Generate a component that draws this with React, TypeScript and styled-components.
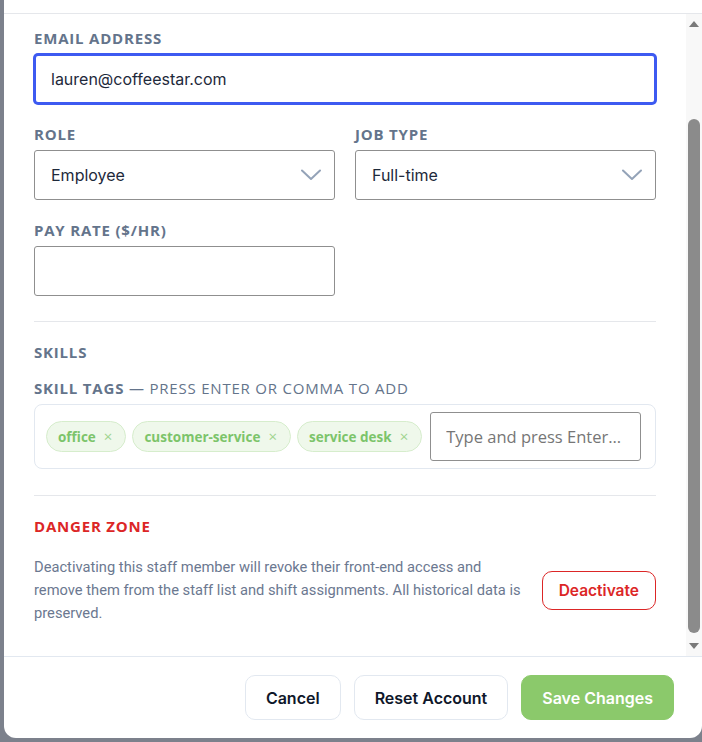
import React, { useCallback, useLayoutEffect, useRef, useState } from "react";
import styled, { createGlobalStyle, css } from "styled-components";

const GlobalStyle = createGlobalStyle`
  html, body { margin: 0; height: 100%; }
  body {
    font-family: "Open Sans", "Noto Sans", sans-serif;
    background: #7c818c;
  }
  * { box-sizing: border-box; }
`;

const Overlay = styled.div`
  position: fixed;
  inset: 0;
  display: flex;
  flex-direction: column;
  justify-content: flex-end;
  align-items: flex-start;
  padding: 0 0 4px 4px;
  background: #7c818c;
  overflow: hidden;
`;

const Modal = styled.div`
  width: 698px;
  flex-shrink: 0;
  display: flex;
  flex-direction: column;
  background: #ffffff;
  border-radius: 12px;
  overflow: hidden;
`;

// modal header sits above the visible area; only its bottom rule shows
const Header = styled.header`
  flex-shrink: 0;
  height: 64px;
  border-bottom: 1px solid #e5e7eb;
`;

const BodyRow = styled.div`
  height: 642px;
  flex-shrink: 0;
  display: flex;
`;

const Body = styled.div`
  flex: 1;
  min-width: 0;
  overflow-y: auto;
  scrollbar-width: none;
  padding: 120px 30px 31px;

  &::-webkit-scrollbar {
    display: none;
  }
`;

const ScrollRail = styled.div`
  width: 16px;
  flex-shrink: 0;
  display: flex;
  flex-direction: column;
  background: #f8f8f8;
`;

const RailArrow = styled.svg`
  display: block;
  flex-shrink: 0;
`;

const Track = styled.div`
  flex: 1;
  padding: 0 2px 3px;
`;

const Thumb = styled.div`
  width: 12px;
  border-radius: 6px;
  background: #8b8b8b;
`;

const Field = styled.div<{ $last?: boolean }>`
  display: flex;
  flex-direction: column;
  margin-bottom: ${({ $last }) => ($last ? 0 : 20)}px;
`;

const Label = styled.label`
  display: block;
  margin-bottom: 6px;
  font-size: 15px;
  line-height: 20px;
  font-weight: 700;
  letter-spacing: 0.8px;
  text-transform: uppercase;
  color: #64748b;
`;

const Hint = styled.span`
  font-weight: 400;
`;

const fieldBox = css`
  width: 100%;
  height: 50px;
  padding: 0 16px;
  border: 1px solid #8f8f8f;
  border-radius: 3px;
  background: #ffffff;
  font-family: Inter, sans-serif;
  font-size: 16px;
  color: #1e293b;
  outline: none;
`;

const TextInput = styled.input<{ $focused?: boolean }>`
  ${fieldBox}
  ${({ $focused }) =>
    $focused &&
    css`
      border: 2px solid #3d5af1;
      border-radius: 4px;
      box-shadow: 0 0 0 1px #3d5af1;
      padding: 0 15px;
    `}
`;

const SelectWrap = styled.div`
  position: relative;
`;

const Select = styled.select`
  ${fieldBox}
  appearance: none;
  cursor: pointer;
`;

const Chevron = styled.svg`
  position: absolute;
  right: 14px;
  top: 19px;
  pointer-events: none;
`;

const Grid = styled.div`
  display: grid;
  grid-template-columns: 1fr 1fr;
  column-gap: 20px;
`;

const Divider = styled.hr<{ $above: number; $below: number }>`
  margin: ${({ $above, $below }) => `${$above}px 0 ${$below}px`};
  border: 0;
  border-top: 1px solid #e5e7eb;
`;

const SectionTitle = styled.h3<{ $danger?: boolean; $gap: number }>`
  margin: 0 0 ${({ $gap }) => $gap}px;
  font-size: 15px;
  line-height: 20px;
  font-weight: 700;
  letter-spacing: 0.8px;
  text-transform: uppercase;
  color: ${({ $danger }) => ($danger ? "#dc2626" : "#64748b")};
`;

const TagBox = styled.div`
  display: flex;
  align-items: center;
  gap: 6px;
  height: 65px;
  margin-top: 2px;
  padding: 7px 14px 7px 11px;
  border: 1px solid #e2e8f0;
  border-radius: 8px;
`;

const Tag = styled.span`
  display: inline-flex;
  align-items: center;
  height: 31px;
  padding: 0 9px 0 11px;
  border: 1px solid #d6edcc;
  border-radius: 16px;
  background: #eff8eb;
  font-size: 13.5px;
  font-weight: 700;
  color: #7cc46a;
  white-space: nowrap;
`;

const TagRemove = styled.button`
  margin-left: 4px;
  padding: 0 4px;
  border: 0;
  background: none;
  font-family: "Open Sans", sans-serif;
  font-size: 15px;
  line-height: 1;
  color: #9fd48f;
  cursor: pointer;
`;

const TagInput = styled.input`
  flex: 1;
  min-width: 160px;
  height: 49px;
  margin-left: 2px;
  padding: 0 8px 0 15px;
  border: 1px solid #8f8f8f;
  border-radius: 3px;
  font-family: "Open Sans", sans-serif;
  font-size: 16.5px;
  color: #1e293b;
  outline: none;

  &::placeholder {
    color: #767676;
  }
`;

const DangerRow = styled.div`
  display: flex;
  align-items: center;
  gap: 12px;
`;

const DangerText = styled.p`
  flex: 1;
  margin: 0;
  font-family: Roboto, sans-serif;
  font-size: 14.7px;
  line-height: 23px;
  color: #6b7890;
`;

const Button = styled.button<{ $variant: "plain" | "primary" | "danger" }>`
  flex-shrink: 0;
  height: 45px;
  padding: 0 20px;
  border-radius: 10px;
  font-family: Inter, sans-serif;
  font-size: 16px;
  font-weight: 600;
  cursor: pointer;
  ${({ $variant }) =>
    $variant === "primary"
      ? css`
          border: 1px solid #8bc96b;
          background: #8bc96b;
          color: #ffffff;
        `
      : $variant === "danger"
      ? css`
          height: 39px;
          padding: 0 16px;
          font-size: 15.5px;
          border: 1px solid #dc2626;
          background: #ffffff;
          color: #dc2626;
        `
      : css`
          border: 1px solid #e2e8f0;
          background: #ffffff;
          color: #0f172a;
        `}
`;

const Footer = styled.footer`
  flex-shrink: 0;
  display: flex;
  justify-content: flex-end;
  gap: 13px;
  padding: 18px 28px 18px;
  border-top: 1px solid #e2e8f0;
`;

const ChevronIcon = () => (
  <Chevron width="20" height="12" viewBox="0 0 20 12" fill="none">
    <polyline
      points="1,1.5 10,10 19,1.5"
      stroke="#94a3b8"
      strokeWidth="2"
      strokeLinecap="round"
      strokeLinejoin="round"
    />
  </Chevron>
);

const ArrowUp = () => (
  <RailArrow width="16" height="20" viewBox="0 0 16 20">
    <polygon points="3,13 8,7 13,13" fill="#7a7a7a" />
  </RailArrow>
);

const ArrowDown = () => (
  <RailArrow width="16" height="20" viewBox="0 0 16 20">
    <polygon points="3,7 13,7 8,13" fill="#7a7a7a" />
  </RailArrow>
);

const skills = ["office", "customer-service", "service desk"];

export default function App() {
  const bodyRef = useRef<HTMLDivElement>(null);
  const trackRef = useRef<HTMLDivElement>(null);
  const [thumb, setThumb] = useState({ top: 0, height: 0 });

  const measure = useCallback(() => {
    const el = bodyRef.current;
    const track = trackRef.current;
    if (!el || !track) return;
    const room = track.clientHeight - 3;
    const height = Math.round((el.clientHeight / el.scrollHeight) * room);
    const max = el.scrollHeight - el.clientHeight;
    const top = max > 0 ? Math.round((el.scrollTop / max) * (room - height)) : 0;
    setThumb({ top, height });
  }, []);

  useLayoutEffect(() => {
    const el = bodyRef.current;
    if (el) el.scrollTop = el.scrollHeight;
    measure();
  }, [measure]);

  return (
    <>
      <GlobalStyle />
      <Overlay>
        <Modal>
          <Header />
          <BodyRow>
            <Body ref={bodyRef} onScroll={measure}>
              <Field>
                <Label>Email Address</Label>
                <TextInput $focused defaultValue="lauren@coffeestar.com" />
              </Field>
              <Grid>
                <Field>
                  <Label>Role</Label>
                  <SelectWrap>
                    <Select defaultValue="Employee">
                      <option>Employee</option>
                      <option>Manager</option>
                      <option>Admin</option>
                    </Select>
                    <ChevronIcon />
                  </SelectWrap>
                </Field>
                <Field>
                  <Label>Job Type</Label>
                  <SelectWrap>
                    <Select defaultValue="Full-time">
                      <option>Full-time</option>
                      <option>Part-time</option>
                      <option>Contract</option>
                    </Select>
                    <ChevronIcon />
                  </SelectWrap>
                </Field>
              </Grid>
              <Grid>
                <Field $last>
                  <Label>Pay Rate ($/hr)</Label>
                  <TextInput type="text" />
                </Field>
              </Grid>

              <Divider $above={25} $below={20} />

              <SectionTitle $gap={16}>Skills</SectionTitle>
              <Label as="div">
                Skill Tags <Hint>— press Enter or comma to add</Hint>
              </Label>
              <TagBox>
                {skills.map((s) => (
                  <Tag key={s}>
                    {s}
                    <TagRemove aria-label={`Remove ${s}`}>×</TagRemove>
                  </Tag>
                ))}
                <TagInput placeholder="Type and press Enter..." />
              </TagBox>

              <Divider $above={26} $below={20} />

              <SectionTitle $danger $gap={20}>
                Danger Zone
              </SectionTitle>
              <DangerRow>
                <DangerText>
                  Deactivating this staff member will revoke their front-end access and remove them from
                  the staff list and shift assignments. All historical data is preserved.
                </DangerText>
                <Button $variant="danger">Deactivate</Button>
              </DangerRow>
            </Body>
            <ScrollRail>
              <ArrowUp />
              <Track ref={trackRef}>
                <Thumb style={{ marginTop: thumb.top, height: thumb.height }} />
              </Track>
              <ArrowDown />
            </ScrollRail>
          </BodyRow>
          <Footer>
            <Button $variant="plain">Cancel</Button>
            <Button $variant="plain">Reset Account</Button>
            <Button $variant="primary">Save Changes</Button>
          </Footer>
        </Modal>
      </Overlay>
    </>
  );
}
